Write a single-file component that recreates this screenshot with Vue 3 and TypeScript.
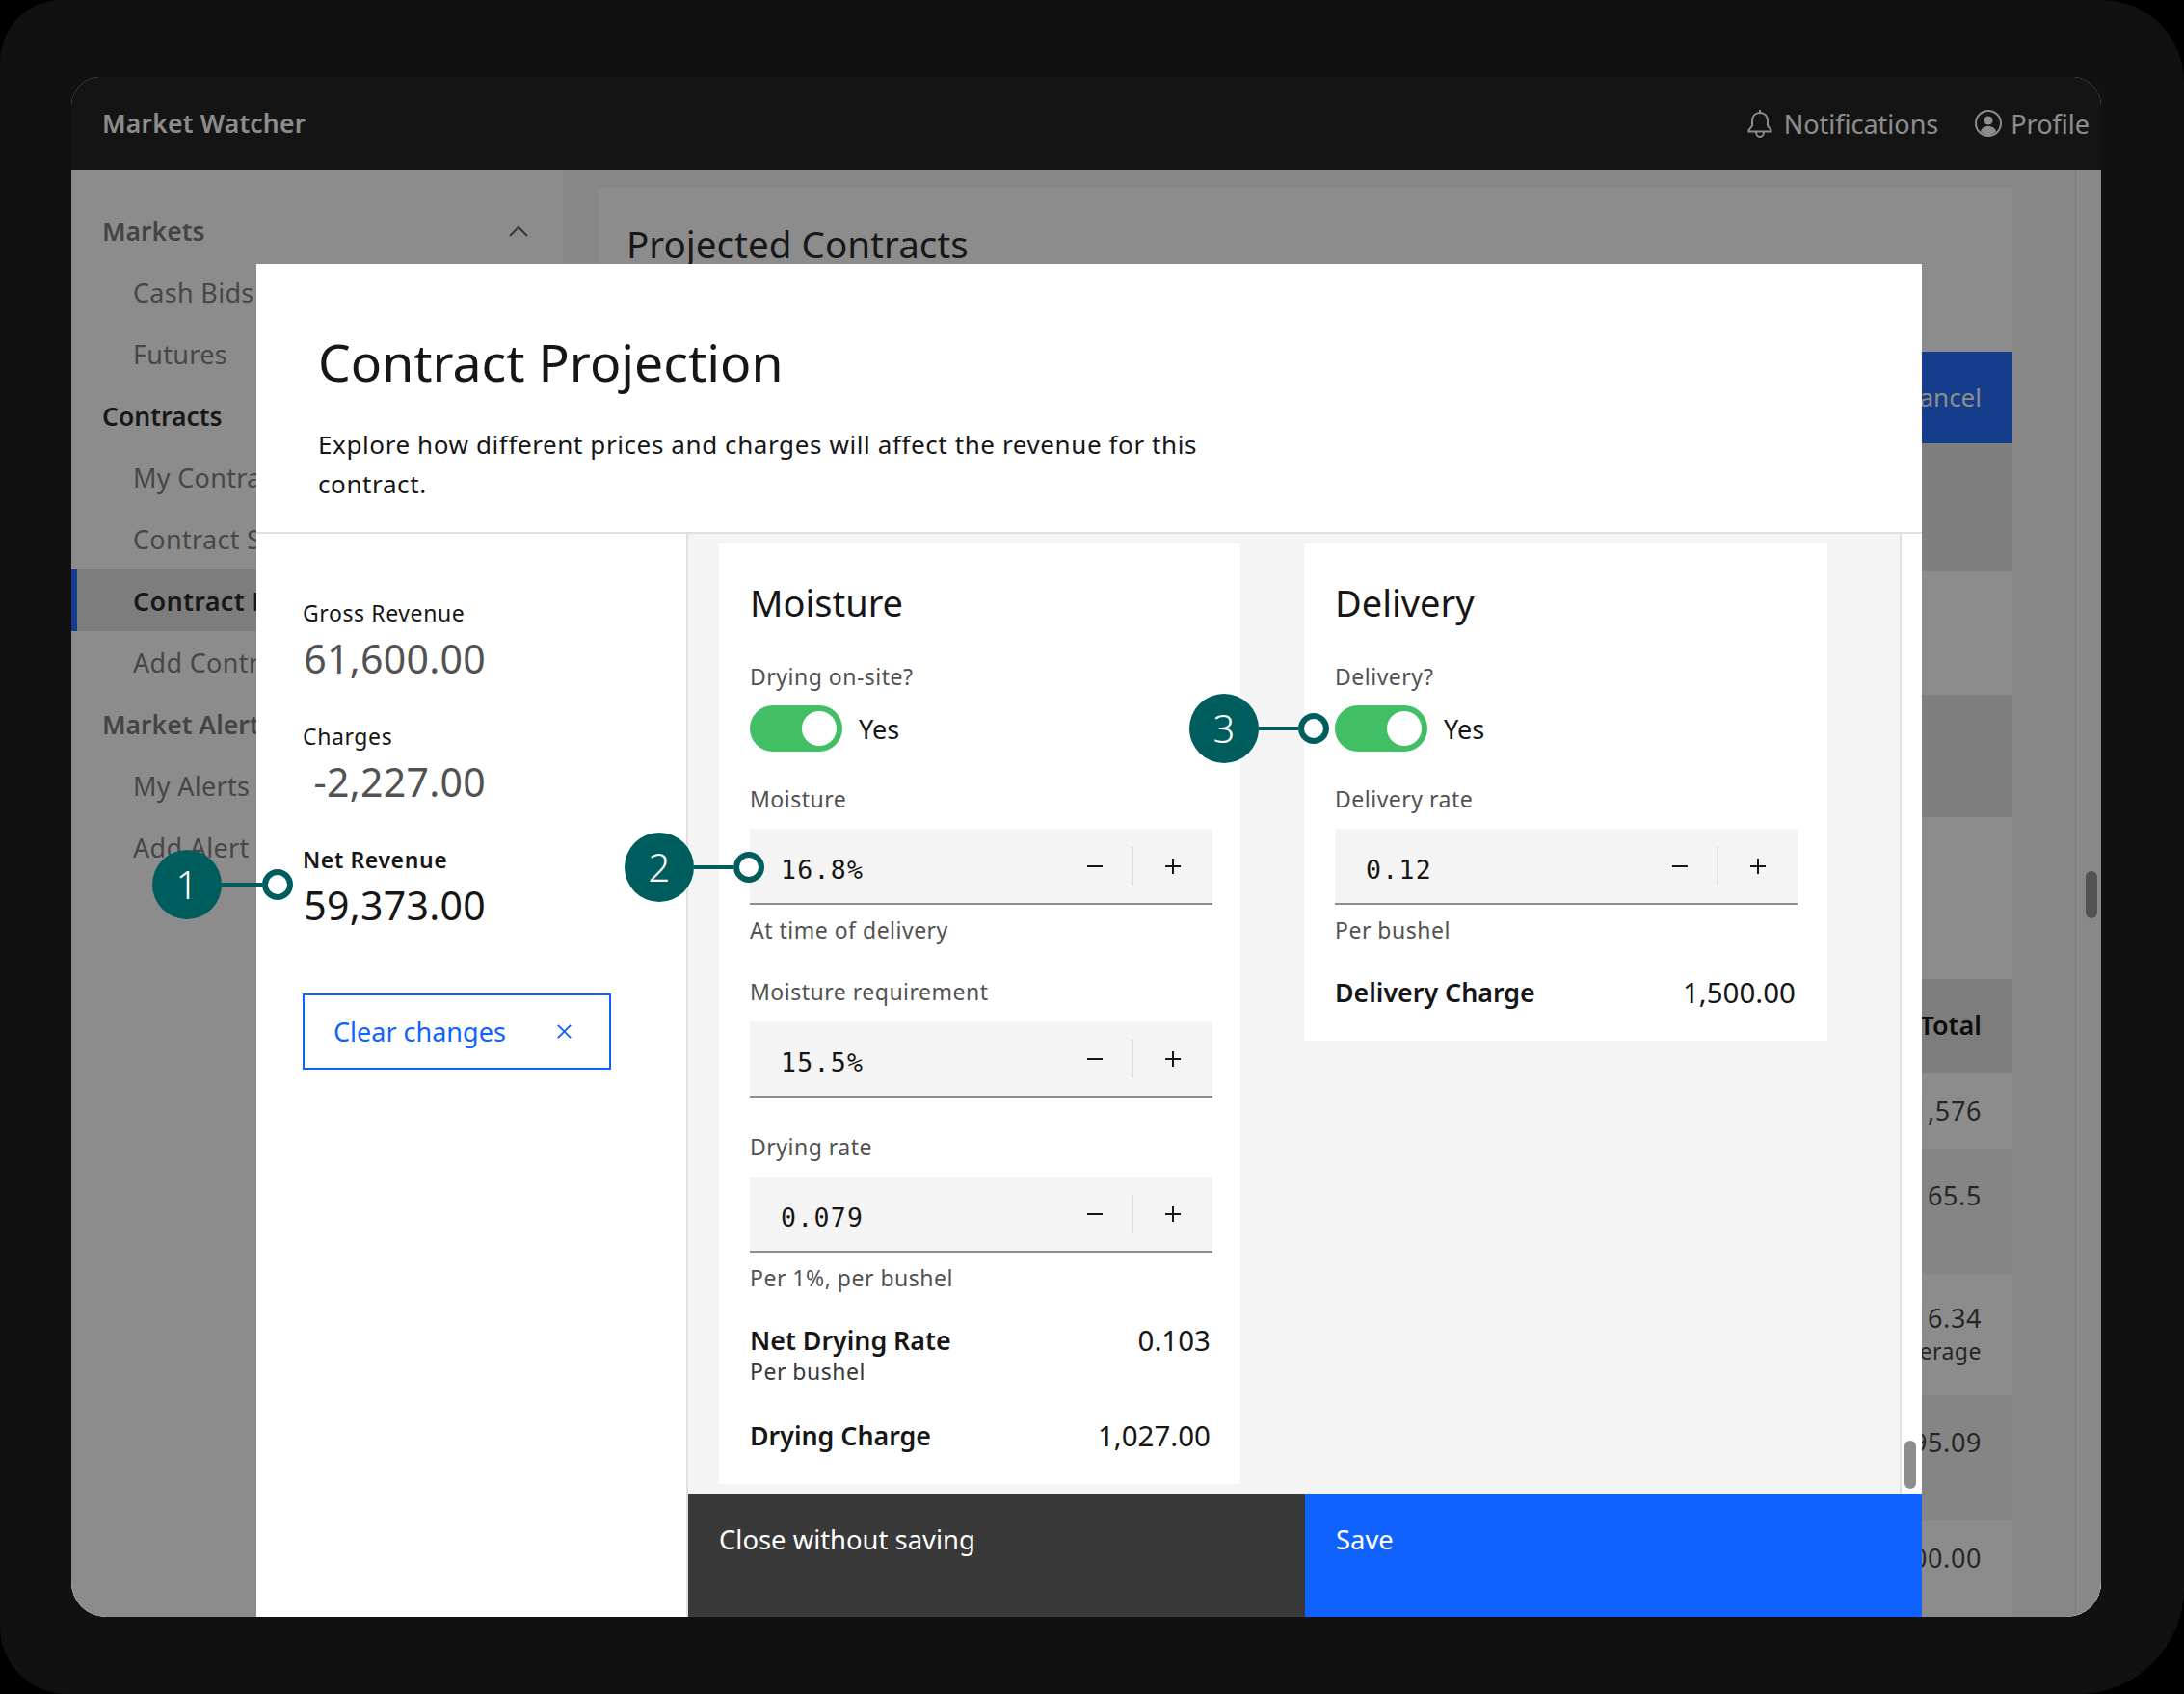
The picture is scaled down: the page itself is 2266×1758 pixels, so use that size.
<script setup lang="ts">
interface Row { h: number; mt: number; pt: number; tone: string; text: string; sub?: string; head?: boolean }
const nav = [
  { label: 'Markets', kind: 'group muted', chevron: true },
  { label: 'Cash Bids', kind: 'sub' },
  { label: 'Futures', kind: 'sub' },
  { label: 'Contracts', kind: 'group' },
  { label: 'My Contracts', kind: 'sub' },
  { label: 'Contract Search', kind: 'sub' },
  { label: 'Contract Projections', kind: 'sub active' },
  { label: 'Add Contract', kind: 'sub' },
  { label: 'Market Alerts', kind: 'group muted' },
  { label: 'My Alerts', kind: 'sub' },
  { label: 'Add Alert', kind: 'sub' },
]
const rows: Row[] = [
  { h: 133, mt: 0, pt: 0, tone: 'dark', text: '' },
  { h: 122, mt: 3, pt: 0, tone: 'light', text: '' },
  { h: 127, mt: 3, pt: 0, tone: 'dark', text: '' },
  { h: 135, mt: 33, pt: 0, tone: 'light', text: '' },
  { h: 98, mt: 0, pt: 33, tone: 'head', text: 'Total', head: true },
  { h: 78, mt: 0, pt: 24, tone: 'light', text: '1,576' },
  { h: 130, mt: 0, pt: 34, tone: 'mid', text: '65.5' },
  { h: 126, mt: 0, pt: 31, tone: 'light', text: '16.34', sub: 'Average' },
  { h: 129, mt: 0, pt: 34, tone: 'mid', text: '2,395.09' },
  { h: 78, mt: 0, pt: 25, tone: 'light', text: '60,000.00' },
]
const callouts = [
  { n: 1, x: 158, y: 918, len: 146 },
  { n: 2, x: 648, y: 900, len: 145 },
  { n: 3, x: 1234, y: 756, len: 145 },
]
const stats = [
  { label: 'Gross Revenue', value: '61,600.00', strong: false },
  { label: 'Charges', value: '-2,227.00', strong: false },
  { label: 'Net Revenue', value: '59,373.00', strong: true },
]
</script>

<template>
  <div class="page">
    <div class="frame">
      <div class="window">
        <header class="topbar">
          <span class="brand">Market Watcher</span>
          <div class="actions">
            <span class="action">
              <svg class="bell" viewBox="0 0 26 30" fill="none" stroke="currentColor" stroke-width="2">
                <path d="M13 1v3M13 4c-5 0-8 3.500-8 8.500v5L1.500 22v1.500h23V22L21 17.500v-5C21 7.500 18 4 13 4z" />
                <path d="M9 24c0 2.800 1.800 5 4 5s4-2.200 4-5" />
              </svg>
              Notifications
            </span>
            <span class="action profile">
              <svg class="user" viewBox="0 0 28 28">
                <circle cx="14" cy="14" r="13" fill="none" stroke="currentColor" stroke-width="2" />
                <circle cx="14" cy="11" r="4.600" fill="currentColor" />
                <path d="M6 22.500c1-4 4-5.500 8-5.500s7 1.500 8 5.500c-2 2.300-5 3.700-8 3.700s-6-1.400-8-3.700z" fill="currentColor" />
              </svg>
              Profile
            </span>
          </div>
        </header>
        <div class="under">
          <nav class="sidenav">
            <div v-for="item in nav" :key="item.label" class="navitem" :class="item.kind">
              <span>{{ item.label }}</span>
              <svg v-if="item.chevron" class="chev" viewBox="0 0 20 12" fill="none" stroke="currentColor" stroke-width="2">
                <path d="M1 11l9-9 9 9" />
              </svg>
            </div>
          </nav>
          <main class="content">
            <section class="panel">
              <h2 class="panel-title">Projected Contracts</h2>
              <div class="panel-actions"><button class="cancel">Cancel</button></div>
              <div
                v-for="(row, i) in rows"
                :key="i"
                class="row"
                :class="row.tone"
                :style="{ height: row.h + 'px', marginTop: row.mt + 'px', paddingTop: row.pt + 'px' }"
              >
                <div :class="row.head ? 'cell-head' : 'cell'">{{ row.text }}</div>
                <div v-if="row.sub" class="cell-sub">{{ row.sub }}</div>
              </div>
            </section>
            <aside class="page-scroll"><span class="page-thumb"></span></aside>
          </main>
        </div>
        <div class="scrim"></div>
        <section class="modal">
          <header class="modal-head">
            <h1 class="modal-title">Contract Projection</h1>
            <p class="modal-desc">Explore how different prices and charges will affect the revenue for this contract.</p>
          </header>
          <div class="modal-body">
            <aside class="summary">
              <div v-for="s in stats" :key="s.label" class="stat" :class="{ strong: s.strong }">
                <div class="stat-label">{{ s.label }}</div>
                <div class="stat-value">{{ s.value }}</div>
              </div>
              <button class="clear">
                <span>Clear changes</span>
                <svg class="clear-x" viewBox="0 0 18 18" fill="none" stroke="currentColor" stroke-width="2">
                  <path d="M2 2l14 14M16 2L2 16" />
                </svg>
              </button>
            </aside>
            <div class="editor">
              <div class="scroller">
                <div class="cards">
                  <section class="card card-moisture">
                    <h3 class="card-title">Moisture</h3>
                    <div class="label first">Drying on-site?</div>
                    <div class="toggle-row">
                      <span class="toggle"><span class="knob"></span></span>
                      <span class="toggle-text">Yes</span>
                    </div>
                    <div class="label after-toggle">Moisture</div>
                    <div class="num">
                      <span class="num-value">16.8%</span>
                      <svg class="step" viewBox="0 0 18 18" stroke="currentColor" stroke-width="2"><path d="M1 9h16" /></svg>
                      <span class="num-sep"></span>
                      <svg class="step" viewBox="0 0 18 18" stroke="currentColor" stroke-width="2"><path d="M1 9h16M9 1v16" /></svg>
                    </div>
                    <div class="helper">At time of delivery</div>
                    <div class="label after-helper">Moisture requirement</div>
                    <div class="num">
                      <span class="num-value">15.5%</span>
                      <svg class="step" viewBox="0 0 18 18" stroke="currentColor" stroke-width="2"><path d="M1 9h16" /></svg>
                      <span class="num-sep"></span>
                      <svg class="step" viewBox="0 0 18 18" stroke="currentColor" stroke-width="2"><path d="M1 9h16M9 1v16" /></svg>
                    </div>
                    <div class="label after-num">Drying rate</div>
                    <div class="num">
                      <span class="num-value">0.079</span>
                      <svg class="step" viewBox="0 0 18 18" stroke="currentColor" stroke-width="2"><path d="M1 9h16" /></svg>
                      <span class="num-sep"></span>
                      <svg class="step" viewBox="0 0 18 18" stroke="currentColor" stroke-width="2"><path d="M1 9h16M9 1v16" /></svg>
                    </div>
                    <div class="helper">Per 1%, per bushel</div>
                    <div class="result"><b>Net Drying Rate</b><span>0.103</span></div>
                    <div class="result-sub">Per bushel</div>
                    <div class="result last"><b>Drying Charge</b><span>1,027.00</span></div>
                  </section>
                  <section class="card card-delivery">
                    <h3 class="card-title">Delivery</h3>
                    <div class="label first">Delivery?</div>
                    <div class="toggle-row">
                      <span class="toggle"><span class="knob"></span></span>
                      <span class="toggle-text">Yes</span>
                    </div>
                    <div class="label after-toggle">Delivery rate</div>
                    <div class="num">
                      <span class="num-value">0.12</span>
                      <svg class="step" viewBox="0 0 18 18" stroke="currentColor" stroke-width="2"><path d="M1 9h16" /></svg>
                      <span class="num-sep"></span>
                      <svg class="step" viewBox="0 0 18 18" stroke="currentColor" stroke-width="2"><path d="M1 9h16M9 1v16" /></svg>
                    </div>
                    <div class="helper">Per bushel</div>
                    <div class="result"><b>Delivery Charge</b><span>1,500.00</span></div>
                  </section>
                </div>
                <div class="modal-scroll"><span class="modal-thumb"></span></div>
              </div>
              <footer class="foot">
                <div class="foot-btn secondary">Close without saving</div>
                <div class="foot-btn primary">Save</div>
              </footer>
            </div>
          </div>
        </section>
      </div>
    </div>
    <div
      v-for="c in callouts"
      :key="c.n"
      class="callout"
      :style="{ left: c.x + 'px', top: c.y - 36 + 'px', width: c.len + 'px' }"
    >
      <span class="callout-num">{{ c.n }}</span>
      <span class="callout-line"></span>
      <span class="callout-ring"></span>
    </div>
  </div>
</template>

<style scoped>
.page {
  position: relative;
  width: 2266px;
  height: 1758px;
  background: #000;
  overflow: hidden;
  font-family: "Noto Sans", Roboto, sans-serif;
  color: #161616;
}
.frame {
  box-sizing: border-box;
  height: 100%;
  background: #111;
  border-radius: 64px 85px 110px 70px;
  padding: 80px 86px 80px 74px;
}
.window {
  position: relative;
  height: 100%;
  display: flex;
  flex-direction: column;
  overflow: hidden;
  background: #fff;
  border-radius: 30px 30px 36px 36px;
}
.topbar {
  flex: none;
  height: 96px;
  background: #0f0f0f;
  color: #fff;
  display: flex;
  align-items: center;
  justify-content: space-between;
  padding: 0 12px 0 32px;
}
.brand { font-size: 26.500px; font-weight: 600; letter-spacing: 0.2px; }
.actions { display: flex; align-items: center; gap: 38px; }
.action { display: flex; align-items: center; gap: 12px; font-size: 27px; font-weight: 400; color: #fff; }
.action.profile { gap: 9px; }
.bell { width: 26px; height: 30px; }
.user { width: 28px; height: 28px; }
.under { flex: 1; display: flex; min-height: 0; }
.sidenav { flex: none; width: 510px; padding-top: 31px; background: #fff; }
.navitem {
  height: 64px;
  display: flex;
  align-items: center;
  justify-content: space-between;
  box-sizing: border-box;
  padding: 0 36px 0 32px;
  font-size: 27px;
  letter-spacing: 0.3px;
  white-space: nowrap;
}
.navitem.group { font-weight: 600; color: #161616; font-size: 26.500px; letter-spacing: 0; padding-top: 2px; }
.navitem.group.muted { color: #6f6f6f; }
.navitem.sub { padding-left: 64px; color: #757575; }
.navitem.active {
  background: #e0e0e0;
  color: #161616;
  font-weight: 600;
  box-shadow: inset 6px 0 0 #0f62fe;
}
.chev { width: 20px; height: 12px; color: #555; }
.content { flex: 1; display: flex; background: #f4f4f4; min-width: 0; }
.panel { flex: 1; margin: 19px 65px 0 37px; background: #fff; min-width: 0; }
.panel-title {
  margin: 0;
  padding: 26px 0 0 29px;
  font-size: 38.600px;
  line-height: 64px;
  font-weight: 400;
  height: 79px;
  color: #161616;
}
.panel-actions { display: flex; justify-content: flex-end; margin-top: 65px; }
.cancel {
  width: 260px;
  height: 95px;
  border: 0;
  background: #0f62fe;
  color: #fff;
  font: inherit;
  font-size: 26px;
  text-align: right;
  padding: 0 32px 2px 0;
}
.row { box-sizing: border-box; padding-right: 32px; text-align: right; color: #161616; }
.row.light { background: #fff; }
.row.dark { background: #e4e4e4; }
.row.mid { background: #f0f0f0; }
.row.head { background: #e0e0e0; }
.cell { font-size: 27px; line-height: 30px; letter-spacing: 0.6px; color: #333; white-space: pre; }
.cell-head { font-size: 27px; line-height: 30px; font-weight: 600; color: #000; }
.cell-sub { font-size: 23px; line-height: 30px; color: #333; margin-top: 4px; letter-spacing: 0.5px; }
.page-scroll {
  position: relative;
  flex: none;
  width: 26px;
  background: #f7f7f7;
  border-left: 1px solid #dcdcdc;
}
.page-thumb {
  position: absolute;
  left: 10px;
  top: 728px;
  width: 12px;
  height: 49px;
  border-radius: 6px;
  background: #8d8d8d;
}
.scrim { position: absolute; inset: 0; background: rgba(25, 25, 25, 0.5); }
.modal {
  position: absolute;
  left: 192px;
  top: 194px;
  right: 186px;
  bottom: 0;
  background: #fff;
  display: flex;
  flex-direction: column;
}
.modal-head {
  flex: none;
  box-sizing: border-box;
  height: 280px;
  padding: 67px 32px 0 64px;
  border-bottom: 2px solid #e0e0e0;
}
.modal-title { margin: 0; font-size: 53.500px; line-height: 70px; font-weight: 400; color: #161616; }
.modal-desc { margin: 30px 0 0; width: 960px; font-size: 26px; line-height: 40.500px; letter-spacing: 0.6px; color: #161616; }
.modal-body { flex: 1; display: flex; min-height: 0; }
.summary {
  flex: none;
  box-sizing: border-box;
  width: 448px;
  border-right: 2px solid #e0e0e0;
  padding: 68px 0 0 48px;
}
.stat { height: 128px; width: 190px; }
.stat-label { font-size: 23px; line-height: 28px; letter-spacing: 0.6px; color: #161616; white-space: nowrap; }
.stat-value { margin-top: 9px; font-size: 41px; line-height: 48px; letter-spacing: 0.3px; color: #525252; text-align: right; white-space: nowrap; }
.stat.strong .stat-label { font-weight: 600; }
.stat.strong .stat-value { color: #161616; }
.clear {
  display: flex;
  align-items: center;
  justify-content: space-between;
  box-sizing: border-box;
  width: 320px;
  height: 79px;
  margin-top: 25px;
  padding: 0 38px 0 30px;
  background: #fff;
  border: 2px solid #0f62fe;
  color: #0f62fe;
  font: inherit;
  font-size: 27px;
}
.clear-x { width: 17px; height: 17px; }
.editor { flex: 1; display: flex; flex-direction: column; min-width: 0; }
.scroller { flex: none; height: 996px; display: flex; background: #f4f4f4; }
.cards { flex: 1; display: flex; align-items: flex-start; gap: 66px; padding: 10px 0 0 32px; }
.card { box-sizing: border-box; background: #fff; padding: 31px 30px 0 32px; }
.card-moisture { width: 541px; height: 976px; }
.card-delivery { width: 543px; height: 516px; }
.card-title { margin: 0; font-size: 38px; line-height: 60px; font-weight: 400; }
.label { font-size: 23px; line-height: 28px; letter-spacing: 0.5px; color: #525252; white-space: nowrap; }
.label.first { margin-top: 33px; }
.label.after-toggle { margin-top: 35px; }
.label.after-helper { margin-top: 36px; }
.label.after-num { margin-top: 37px; }
.toggle-row { display: flex; align-items: center; gap: 17px; margin-top: 16px; height: 48px; }
.toggle {
  position: relative;
  display: block;
  width: 96px;
  height: 48px;
  border-radius: 24px;
  background: #42be65;
}
.knob {
  position: absolute;
  right: 6px;
  top: 6px;
  width: 36px;
  height: 36px;
  border-radius: 50%;
  background: #fff;
}
.toggle-text { font-size: 27px; }
.num {
  box-sizing: border-box;
  height: 79px;
  margin-top: 17px;
  background: #f4f4f4;
  border-bottom: 2px solid #8d8d8d;
  width: 480px;
  display: flex;
  align-items: center;
  padding: 0 32px;
}
.num-value {
  flex: 1;
  font-family: "DejaVu Sans Mono", monospace;
  font-size: 26.500px;
  letter-spacing: 1.300px;
  padding-top: 8px;
}
.step { width: 18px; height: 18px; flex: none; }
.num-sep { width: 2px; height: 40px; background: #e0e0e0; margin: 0 32px 0 29px; }
.helper { margin-top: 12px; font-size: 23px; line-height: 28px; letter-spacing: 0.5px; color: #525252; }
.result {
  display: flex;
  justify-content: space-between;
  margin-top: 35px;
  font-size: 29.500px;
  line-height: 32px;
  width: 478px;
}
.result b { font-weight: 600; font-size: 26.800px; }
.result-sub { margin-top: 2px; font-size: 23px; line-height: 28px; letter-spacing: 0.5px; color: #393939; }
.result.last { margin-top: 37px; }
.modal-scroll { position: relative; flex: none; width: 23px; background: #fff; border-left: 2px solid #e0e0e0; box-sizing: border-box; }
.modal-thumb {
  position: absolute;
  left: 3px;
  top: 941px;
  width: 12px;
  height: 50px;
  border-radius: 6px;
  background: #8d8d8d;
}
.foot { flex: 1; display: flex; align-items: stretch; }
.foot-btn {
  flex: 1;
  font-size: 27.400px;
  color: #fff;
  padding: 32px 32px 0;
  line-height: 32px;
}
.foot-btn.secondary { background: #393939; }
.foot-btn.primary { background: #0f62fe; }
.callout { position: absolute; height: 72px; display: flex; align-items: center; }
.callout-num {
  flex: none;
  width: 72px;
  height: 72px;
  border-radius: 50%;
  background: #005d5d;
  color: #fff;
  font-size: 40px;
  text-align: center;
  line-height: 72px;
  font-weight: 300;
}
.callout-line { flex: 1; height: 4px; background: #005d5d; }
.callout-ring {
  flex: none;
  box-sizing: border-box;
  width: 32px;
  height: 32px;
  border: 6px solid #005d5d;
  border-radius: 50%;
  background: #fff;
}
</style>

<style>
body { margin: 0; background: #000; }
</style>
